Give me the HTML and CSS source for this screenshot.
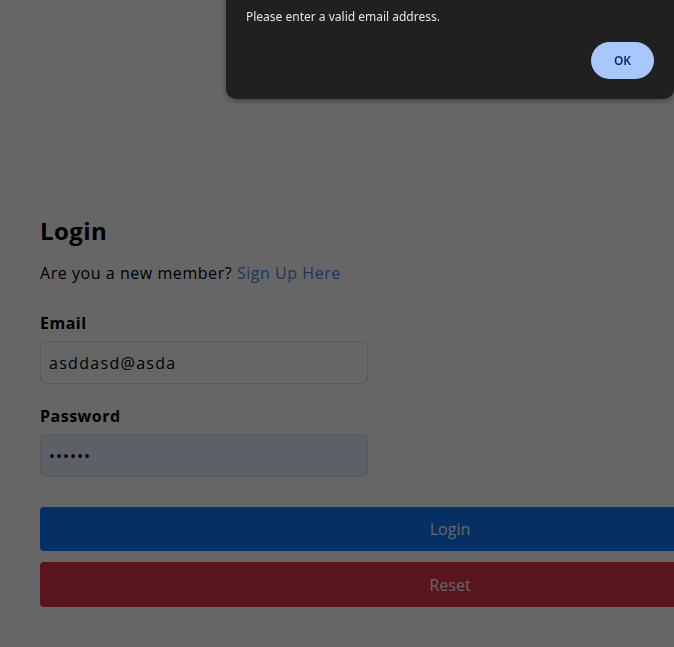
FILE: index.html
```html
<!DOCTYPE html>
<html lang="en">
<head>
<meta charset="utf-8">
<title>Login</title>
<link rel="stylesheet" href="styles.css">
</head>
<body>
<main class="page">
  <form class="login-form">
    <h2 class="title">Login</h2>
    <p class="subtitle">Are you a new member? <a href="#" class="link">Sign Up Here</a></p>
    <div class="field">
      <label class="label" for="email">Email</label>
      <input class="input" id="email" type="text" value="asddasd@asda">
    </div>
    <div class="field">
      <label class="label" for="password">Password</label>
      <input class="input input-autofill" id="password" type="password" value="123456">
    </div>
    <div class="actions">
      <button type="button" class="btn btn-primary">Login</button>
      <button type="button" class="btn btn-danger">Reset</button>
    </div>
  </form>
</main>
<div class="overlay"></div>
<div class="dialog">
  <p class="dialog-text">Please enter a valid email address.</p>
  <div class="dialog-actions">
    <button type="button" class="dialog-ok">OK</button>
  </div>
</div>
</body>
</html>
```
FILE: styles.css
```css
html, body {
  margin: 0;
  padding: 0;
  background: #ffffff;
  overflow: hidden;
}
body {
  font-family: "Open Sans", "Noto Sans", sans-serif;
  color: #000;
}
.page {
  padding: 213px 0 0 40px;
}
.login-form {
  width: 820px;
}
.title {
  margin: 0;
  font-size: 24px;
  font-weight: 700;
  line-height: 36px;
  letter-spacing: 0.4px;
}
.subtitle {
  margin: 12px 0 0;
  font-size: 16px;
  line-height: 24px;
  letter-spacing: 0.55px;
}
.link {
  color: #4a8ae6;
  text-decoration: none;
}
.field {
  display: flex;
  flex-direction: column;
  margin-top: 26px;
}
.field + .field {
  margin-top: 20px;
}
.label {
  font-size: 16px;
  font-weight: 700;
  line-height: 24px;
  margin-bottom: 6px;
  letter-spacing: 0.5px;
}
.input {
  box-sizing: border-box;
  width: 328px;
  height: 43px;
  border: 1px solid #dee2e6;
  border-radius: 5px;
  padding: 0 8px;
  font-family: inherit;
  font-size: 16px;
  letter-spacing: 1.3px;
  color: #000;
  background: #fff;
  outline: none;
}
.input-autofill {
  background: #e8f0fe;
  letter-spacing: 1px;
}
.actions {
  display: flex;
  flex-direction: column;
  gap: 11px;
  margin-top: 30px;
}
.btn {
  height: 44px;
  width: 820px;
  border: none;
  border-radius: 4px;
  color: #fff;
  font-family: inherit;
  font-size: 16px;
}
.btn-primary { background: #0b78f7; }
.btn-danger { background: #dc3545; height: 45px; }

.overlay {
  position: fixed;
  inset: 0;
  background: rgba(0, 0, 0, 0.6);
}
.dialog {
  position: fixed;
  left: 226px;
  top: -20px;
  width: 448px;
  height: 119px;
  box-sizing: border-box;
  padding: 29px 20px 0;
  background: #202020;
  border-radius: 10px;
  box-shadow: 0 2px 6px rgba(0, 0, 0, 0.35);
  font-family: "Noto Sans", "Open Sans", sans-serif;
}
.dialog-text {
  margin: 0;
  font-size: 12px;
  line-height: 16px;
  color: #e3e3e3;
}
.dialog-actions {
  display: flex;
  justify-content: flex-end;
  margin-top: 17px;
}
.dialog-ok {
  width: 63px;
  height: 37px;
  border: none;
  border-radius: 19px;
  background: #a8c7fa;
  color: #062e6f;
  font-family: inherit;
  font-size: 12px;
  font-weight: 600;
}
```
